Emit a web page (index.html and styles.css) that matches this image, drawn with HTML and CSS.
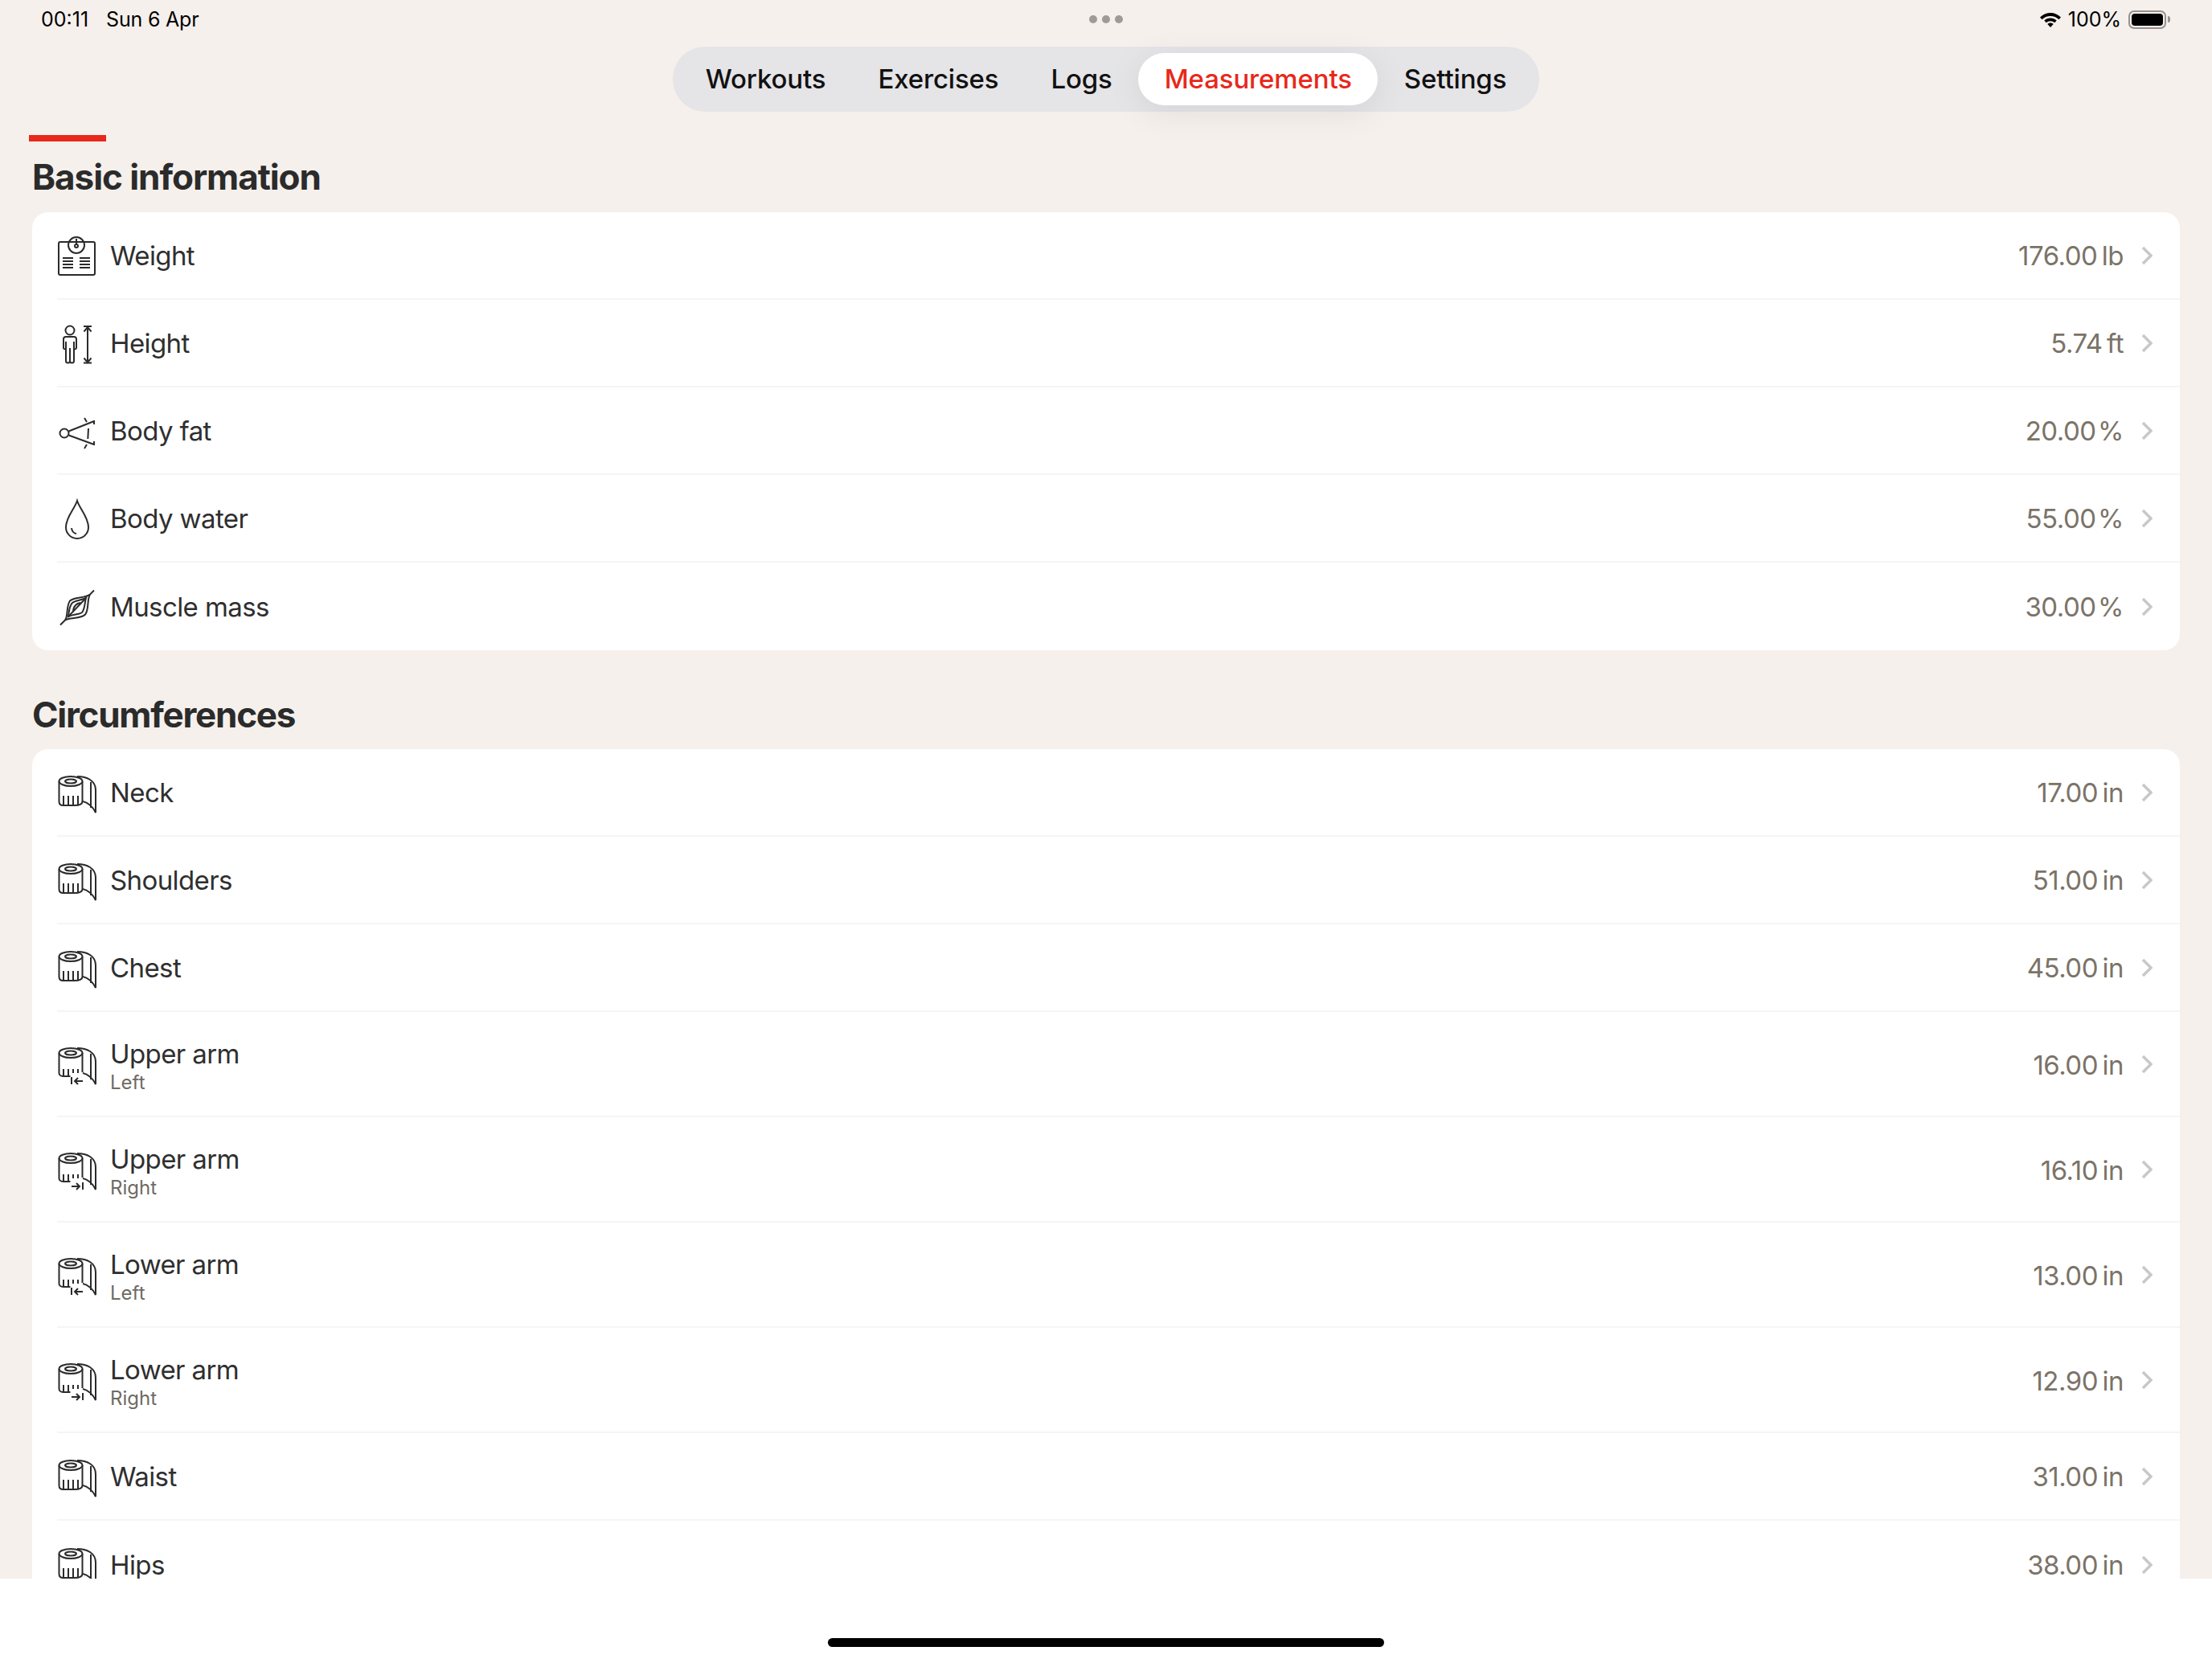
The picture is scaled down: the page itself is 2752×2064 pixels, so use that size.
FILE: index.html
```html
<!DOCTYPE html>
<html lang="en">
<head>
  <meta charset="UTF-8" />
  <title>Measurements</title>
  <link rel="stylesheet" href="styles.css">
</head>
<body>
  <!-- Icon sprites, 52x52 -->
  <svg class="sprites" width="0" height="0">
    <symbol id="i-weight" viewBox="0 0 52 52">
      <rect x="3" y="9" width="45" height="41" rx="2"/>
      <circle class="w" cx="25" cy="13" r="10"/>
      <path d="M25 5v7"/>
      <circle cx="25" cy="14" r="2"/>
      <path d="M8 29h13M8 33h13M8 37h13M8 41h13M29 29h13M29 33h13M29 37h13M29 41h13"/>
    </symbol>
    <symbol id="i-height" viewBox="0 0 52 52">
      <circle cx="17" cy="10" r="5.5"/>
      <path d="M12 18h10a3 3 0 0 1 3 3v11a2 2 0 0 1-3 1V24M12 18a3 3 0 0 0-3 3v11a2 2 0 0 0 3 1V24"/>
      <path d="M12 33v15a2 2 0 0 0 5 0V32M22 33v15a2 2 0 0 1-5 0"/>
      <path d="M34 5h10M39 6v44M34.5 11.5 39 6l4.5 5.5M34.5 44.5 39 50l4.5-5.5"/>
      <path class="b" d="M34 50.5h10"/>
    </symbol>
    <symbol id="i-fat" viewBox="0 0 52 52">
      <circle cx="10" cy="29" r="5.5"/>
      <path d="M15.500 26.500 47 14M15.500 31.500 47 43M47 13v5M47 39v5M35 10l3 5M35 48l3-5M40 23l-.7 13"/>
    </symbol>
    <symbol id="i-water" viewBox="0 0 52 52">
      <path d="M26 4C23 14 12 24 12 37a14 14 0 0 0 28 0C40 24 29 14 26 4Z"/>
      <path d="M19 38c.5 4 3 6.500 6 7"/>
    </symbol>
    <symbol id="i-muscle" viewBox="0 0 52 52">
      <path d="M5 48.500l6-6c4-5 1-17 6-24 5-5 19-3 25-8l5-5"/>
      <path d="M11 42.500c6-4 19-1 25-7 5-6 2-19 6-25"/>
      <path d="M15 38c1-7 1-13 5-17 4-3 11-3 17-6-2 7-1 13-5 18-4 3-11 2-17 5Z"/>
      <path d="M15 38 37 15M21 32c0-4 1-6 3-8s5-3 7-3"/>
    </symbol>
    <symbol id="i-tape" viewBox="0 0 52 52">
      <ellipse cx="18" cy="12" rx="14.500" ry="6"/>
      <ellipse cx="18" cy="12" rx="7" ry="2.500"/>
      <path d="M3.500 12v25c0 3 2 5 5 5h14c5 0 10-1 10-5V12"/>
      <path d="M9 30v12M15 30v12M21 30v12M27 30v11"/>
      <path d="M26 6c12 0 23 5 23 17v28c-3-7-10-13-16-14M43 13v32"/>
    </symbol>
    <symbol id="i-tape-left" viewBox="0 0 52 52">
      <ellipse cx="18" cy="12" rx="14.500" ry="6"/>
      <ellipse cx="18" cy="12" rx="7" ry="2.500"/>
      <path d="M3.500 12v25c0 2 2 4 5 4h9M32.500 12v24"/>
      <path d="M9 32v9M15 32v9M21 32v5M27 32v5"/>
      <path d="M26 6c12 0 23 5 23 17v28c-3-7-10-13-16-14M43 13v32"/>
      <path d="M19 42v9M33 47H23M27 43l-4 4 4 4"/>
    </symbol>
    <symbol id="i-tape-right" viewBox="0 0 52 52">
      <ellipse cx="18" cy="12" rx="14.500" ry="6"/>
      <ellipse cx="18" cy="12" rx="7" ry="2.500"/>
      <path d="M3.500 12v25c0 2 2 4 5 4h9M32.500 12v24"/>
      <path d="M9 32v9M15 32v9M21 32v5M27 32v5"/>
      <path d="M26 6c12 0 23 5 23 17v28c-3-7-10-13-16-14M43 13v32"/>
      <path d="M33 42v9M19 47h10M25 43l4 4-4 4"/>
    </symbol>
    <symbol id="i-chevron" viewBox="0 0 14 24">
      <path d="M2 2l10 10L2 22"/>
    </symbol>
  </svg>

  <main class="screen">
    <div class="status">
      <div class="status-left"><span>00:11</span><span class="date">Sun 6 Apr</span></div>
      <div class="dots"><i></i><i></i><i></i></div>
      <div class="status-right">
        <svg class="wifi" width="28" height="20" viewBox="0 0 28 20">
          <path d="M14 2C9 2 4.500 4 1 7.500l2.500 2.700C6.300 7.500 10 6 14 6s7.700 1.500 10.500 4.200L27 7.500C23.500 4 19 2 14 2Z"/>
          <path d="M14 8.500c-3 0-5.700 1.200-7.700 3.100l2.500 2.700c1.400-1.300 3.200-2.100 5.200-2.100s3.800.8 5.200 2.100l2.500-2.700c-2-1.900-4.700-3.100-7.700-3.100Z"/>
          <path d="M14 14.500c-1.500 0-2.800.6-3.700 1.400L14 20l3.700-4.100c-.9-.8-2.200-1.400-3.700-1.400Z"/>
        </svg>
        <span>100%</span>
        <div class="battery"><div class="battery-fill"></div></div>
        <div class="battery-nub"></div>
      </div>
    </div>

    <nav class="tabs-wrap">
      <div class="tabs">
        <a class="tab">Workouts</a>
        <a class="tab">Exercises</a>
        <a class="tab">Logs</a>
        <a class="tab active">Measurements</a>
        <a class="tab">Settings</a>
      </div>
    </nav>

    <div class="accent"></div>

    <h2 class="section-title first">Basic information</h2>
    <section class="card">
      <div class="row"><svg class="icon"><use href="#i-weight"/></svg><div class="label">Weight</div><div class="value">176.00&thinsp;lb</div><svg class="chevron"><use href="#i-chevron"/></svg></div>
      <div class="row"><svg class="icon"><use href="#i-height"/></svg><div class="label">Height</div><div class="value">5.74&thinsp;ft</div><svg class="chevron"><use href="#i-chevron"/></svg></div>
      <div class="row"><svg class="icon"><use href="#i-fat"/></svg><div class="label">Body fat</div><div class="value">20.00&#8202;%</div><svg class="chevron"><use href="#i-chevron"/></svg></div>
      <div class="row"><svg class="icon"><use href="#i-water"/></svg><div class="label">Body water</div><div class="value">55.00&#8202;%</div><svg class="chevron"><use href="#i-chevron"/></svg></div>
      <div class="row"><svg class="icon"><use href="#i-muscle"/></svg><div class="label">Muscle mass</div><div class="value">30.00&#8202;%</div><svg class="chevron"><use href="#i-chevron"/></svg></div>
    </section>

    <h2 class="section-title">Circumferences</h2>
    <section class="card">
      <div class="row"><svg class="icon"><use href="#i-tape"/></svg><div class="label">Neck</div><div class="value">17.00&thinsp;in</div><svg class="chevron"><use href="#i-chevron"/></svg></div>
      <div class="row"><svg class="icon"><use href="#i-tape"/></svg><div class="label">Shoulders</div><div class="value">51.00&thinsp;in</div><svg class="chevron"><use href="#i-chevron"/></svg></div>
      <div class="row"><svg class="icon"><use href="#i-tape"/></svg><div class="label">Chest</div><div class="value">45.00&thinsp;in</div><svg class="chevron"><use href="#i-chevron"/></svg></div>
      <div class="row tall"><svg class="icon"><use href="#i-tape-left"/></svg><div class="label">Upper arm<small>Left</small></div><div class="value">16.00&thinsp;in</div><svg class="chevron"><use href="#i-chevron"/></svg></div>
      <div class="row tall"><svg class="icon"><use href="#i-tape-right"/></svg><div class="label">Upper arm<small>Right</small></div><div class="value">16.10&thinsp;in</div><svg class="chevron"><use href="#i-chevron"/></svg></div>
      <div class="row tall"><svg class="icon"><use href="#i-tape-left"/></svg><div class="label">Lower arm<small>Left</small></div><div class="value">13.00&thinsp;in</div><svg class="chevron"><use href="#i-chevron"/></svg></div>
      <div class="row tall"><svg class="icon"><use href="#i-tape-right"/></svg><div class="label">Lower arm<small>Right</small></div><div class="value">12.90&thinsp;in</div><svg class="chevron"><use href="#i-chevron"/></svg></div>
      <div class="row"><svg class="icon"><use href="#i-tape"/></svg><div class="label">Waist</div><div class="value">31.00&thinsp;in</div><svg class="chevron"><use href="#i-chevron"/></svg></div>
      <div class="row"><svg class="icon"><use href="#i-tape"/></svg><div class="label">Hips</div><div class="value">38.00&thinsp;in</div><svg class="chevron"><use href="#i-chevron"/></svg></div>
    </section>
  </main>

  <footer class="home"><div class="home-bar"></div></footer>
</body>
</html>
```

FILE: styles.css
```css
html, body {
  margin: 0;
  background: #fff;
  font-family: 'Inter', 'Liberation Sans', sans-serif;
  color: #2b2b2b;
}
.sprites { position: absolute; }
.screen {
  height: 1964px;
  overflow: hidden;
  background: #f5f0ec;
  padding: 0 40px;
  box-sizing: border-box;
}

/* Status bar */
.status {
  height: 58px;
  margin: 0 -40px;
  padding: 0 52px 0 51px;
  display: grid;
  grid-template-columns: 1fr auto 1fr;
  align-items: start;
  font-size: 25px;
  color: #000;
}
.status-left { display: flex; gap: 22px; padding-top: 9px; }
.date { letter-spacing: -.2px; }
.status-right { display: flex; justify-content: flex-end; align-items: center; padding-top: 9px; }
.status-right span { margin: 0 9px 0 8px; }
.dots { display: flex; gap: 6px; padding-top: 19px; }
.dots i { width: 10px; height: 10px; border-radius: 50%; background: #a09a94; }
.battery {
  width: 47px;
  height: 23px;
  box-sizing: border-box;
  border: 2px solid #96918c;
  border-radius: 7px;
  padding: 2px;
}
.battery-fill { height: 100%; background: #000; border-radius: 4px; }
.battery-nub { width: 3px; height: 8px; margin-left: 2px; background: #96918c; border-radius: 0 3px 3px 0; }

/* Tabs */
.tabs-wrap { display: flex; justify-content: center; }
.tabs {
  display: flex;
  align-items: center;
  height: 81px;
  box-sizing: border-box;
  padding: 8px;
  background: #e5e4e7;
  border-radius: 40px;
}
.tab {
  display: block;
  padding: 0 32.5px;
  line-height: 65px;
  font-size: 33px;
  font-weight: 500;
  letter-spacing: -.15px;
  color: #111;
}
.tab.active {
  color: #e8281a;
  background: #fff;
  border-radius: 33px;
  box-shadow: 0 8px 44px rgba(0, 0, 0, .08);
}

.accent { width: 96px; height: 8px; margin: 29px 0 0 -4px; background: #e8281a; }

/* Sections */
.section-title {
  margin: 0;
  padding-top: 54px;
  height: 69px;
  font-size: 44px;
  line-height: 53px;
  font-weight: 700;
  letter-spacing: -1.25px;
  color: #2b2b2b;
}
.section-title.first { padding-top: 18px; height: 70px; letter-spacing: -1.05px; }
.card {
  background: #fff;
  border-radius: 20px;
  padding-left: 31px;
}
.row {
  display: flex;
  align-items: center;
  height: 109px;
  box-sizing: border-box;
  padding-right: 34px;
  border-bottom: 2px solid #f7f5f3;
}
.row:last-child { border-bottom: 0; }
.row.tall { height: 131px; }
.icon {
  width: 52px;
  height: 52px;
  margin: 0 15px 0 -1px;
  flex: none;
  fill: none;
  stroke: #2b2b2b;
  stroke-width: 2;
}
.icon .w { fill: #fff; }
.icon .b { stroke-width: 3; }
.label { flex: 1; font-size: 33px; line-height: 40px; letter-spacing: -.6px; color: #2f2f2f; }
.tall .label { padding-top: 5px; }
.label small { display: block; margin-top: 2px; font-size: 24px; line-height: 28px; letter-spacing: 0; color: #6f6a63; }
.value { font-size: 33px; letter-spacing: -.5px; color: #7b7368; }
.tall .value { padding-top: 2px; }
.chevron {
  width: 14px;
  height: 24px;
  margin-left: 22px;
  flex: none;
  fill: none;
  stroke: #c8c8c8;
  stroke-width: 3.5;
}

/* Home indicator */
.home { height: 100px; padding-top: 74px; box-sizing: border-box; display: flex; justify-content: center; }
.home-bar { width: 692px; height: 11px; background: #000; border-radius: 6px; }
```
